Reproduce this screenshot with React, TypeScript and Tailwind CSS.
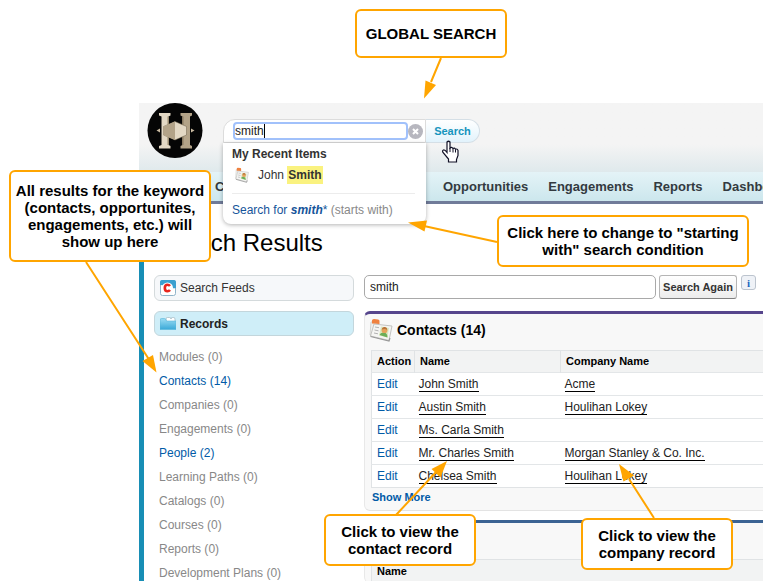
import React from "react";

const modules = [
  { name: "Modules", count: 0 },
  { name: "Contacts", count: 14 },
  { name: "Companies", count: 0 },
  { name: "Engagements", count: 0 },
  { name: "People", count: 2 },
  { name: "Learning Paths", count: 0 },
  { name: "Catalogs", count: 0 },
  { name: "Courses", count: 0 },
  { name: "Reports", count: 0 },
  { name: "Development Plans", count: 0 },
];

const contacts = [
  { name: "John Smith", company: "Acme" },
  { name: "Austin Smith", company: "Houlihan Lokey" },
  { name: "Ms. Carla Smith", company: "" },
  { name: "Mr. Charles Smith", company: "Morgan Stanley & Co. Inc." },
  { name: "Chelsea Smith", company: "Houlihan Lokey" },
];

function Logo() {
  return (
    <svg viewBox="0 0 56 56" className="ml-px size-14 shrink-0" role="img" aria-label="Company logo">
      <circle cx="28" cy="27.500" r="27.500" fill="#050505" />
      <path d="M12 10h11.500v2.500l-2 1V42l2 1v2.500H12V43l2.500-1V13.500l-2.500-1z" fill="#e3d8c4" />
      <path d="M20.500 13.500h1.500V42h-1.500z" fill="#9a8b70" />
      <path d="M33.500 10H45v2.500l-2 1V42l2 1v2.500H33.500V43l2-1V13.500l-2-1z" fill="#b3a388" />
      <path d="M35 13.500h1.500V42H35z" fill="#8a7b62" />
      <path d="M9.500 27.500l3.500-2v4zM47.500 27.500l-3.500-2v4z" fill="#c9baa0" />
      <path d="M28 18.500l11.500 5v8.500L28 37l-11.500-5v-8.500z" fill="#e3d8c4" stroke="#6d604b" strokeWidth="0.500" />
      <path d="M28 18.500V37l-11.500-5v-8.500z" fill="#b3a388" />
    </svg>
  );
}

function ContactIcon({ className }: { className: string }) {
  return (
    <svg viewBox="0 0 24 24" preserveAspectRatio="none" className={className} aria-hidden="true">
      <path d="M2 4l7-1 1 16-9-2z" fill="#f1f1ef" stroke="#c5c5c2" strokeWidth="0.7" />
      <path d="M3 2.500Q3 1 5 1l4 .5q1.500 0 1.500 1.500V6L3 5.500z" fill="#ef813f" />
      <path d="M5 6l18 2-3 14.500L1.500 18z" fill="#f5f5f3" stroke="#b6b6b4" strokeWidth="0.8" />
      <path d="M1.500 18.500l18.500 4.500 1-3" fill="none" stroke="#999" strokeWidth="1.200" />
      <path d="M6 9l4 .7M5.500 12l4 .8M5 15l4 .8" stroke="#aaa" strokeWidth="0.900" />
      <path d="M12 8.500l8 1.500-1.500 9.500-8.500-2z" fill="#dbe8c0" />
      <path d="M10.500 17q1-3 4.500-2.500 3.500.5 3.500 5z" fill="#6cae58" />
      <circle cx="15.500" cy="12.200" r="2.900" fill="#e6a35c" />
      <path d="M12.700 11.500q.5-3 3.200-2.500 2.500.5 2.200 3-1.500-1.500-5.400-.5z" fill="#b9743a" />
    </svg>
  );
}

function FeedIcon() {
  return (
    <svg viewBox="0 0 16 16" className="size-4" aria-hidden="true">
      <rect x="0.500" y="0.500" width="15" height="15" rx="2" fill="#fff" stroke="#8fb3c9" />
      <path d="M0 2q0-2 2-2h12q2 0 2 2v6q-4 1-7-1T0 5z" fill="#3ba0cf" />
      <circle cx="7.500" cy="8" r="5.500" fill="#fff" />
      <path d="M10 6Q9 4.700 7.500 4.700 4.800 4.700 4.800 8T7.500 11.300Q9 11.300 10 10" fill="none" stroke="#e8251d" strokeWidth="2.600" />
    </svg>
  );
}

function FolderIcon() {
  return (
    <svg viewBox="0 0 16 14" className="h-3.5 w-4" aria-hidden="true">
      <defs>
        <linearGradient id="folder" x2="0" y2="1">
          <stop stopColor="#9bdcf3" />
          <stop offset="1" stopColor="#3aa9d8" />
        </linearGradient>
      </defs>
      <path d="M6 2q0-1.500 1.500-1.500h2Q11 .5 11 2q0-1.500 1.500-1.500h1Q15 .5 15 2v3H6z" fill="#fff" stroke="#9fb4bf" strokeWidth="0.700" />
      <path d="M0 3q0-1.500 1.500-1.500h3Q6 1.500 6.500 4H16v8.500H0z" fill="url(#folder)" stroke="#58b5da" strokeWidth="0.600" />
    </svg>
  );
}

function Callout({ className, children }: { className: string; children: React.ReactNode }) {
  return (
    <div
      className={`absolute z-30 flex items-center justify-center rounded-md border-2 border-[#ffa500] bg-white text-center text-[15px] leading-[17px] font-bold text-black ${className}`}
    >
      <p>{children}</p>
    </div>
  );
}

function Arrows() {
  return (
    <svg width="763" height="581" className="pointer-events-none absolute top-0 left-0 z-20" fill="#ffa500" stroke="#ffa500" strokeWidth="2" aria-hidden="true">
      <path d="M441 58L431 82M86 262L150 361M497 307" fill="none" />
      <path d="M424 98.500L425.500 80.500 436 85z" stroke="none" />
      <path d="M156.500 372.500L142.500 361 153 355z" stroke="none" />
      <path d="M497 242L424 226M396 515L437 471M654 518L629 479" fill="none" />
      <path d="M408 222.500L427 220.500 424.500 231.500z" stroke="none" />
      <path d="M447 461L440.500 477.500 431.500 469z" stroke="none" />
      <path d="M619 464L634 475.500 623.500 481.500z" stroke="none" />
    </svg>
  );
}

function Header() {
  return (
    <header>
      <div className="flex h-[69px] items-start bg-linear-to-b from-[#f4f4f4] from-60% to-[#dfe9ec] pl-[7px]">
        <Logo />
        <form className="relative mt-4 ml-5 flex h-6 items-stretch" onSubmit={(e) => e.preventDefault()}>
          <div className="relative flex w-[203px] items-center rounded-tl-xl border border-[#dcdcdc] bg-white pl-[9px]">
            <input
              aria-label="Global search"
              defaultValue="smith"
              className="h-[18px] w-[175px] rounded-sm border-2 border-[#a1c1fb] bg-white text-xs text-[#222] outline-none"
            />
            <span className="absolute top-1 left-10 h-3.5 w-px bg-black" />
            <button type="button" aria-label="Clear search">
              <svg viewBox="0 0 15 15" className="size-[15px]" aria-hidden="true">
                <circle cx="7.500" cy="7.500" r="7.500" fill="#b7b7bf" />
                <path d="M5 5l5 5M10 5l-5 5" stroke="#fff" strokeWidth="2" />
              </svg>
            </button>
          </div>
          <button className="w-[54px] rounded-r-full border border-l-0 border-[#d5dfe6] bg-linear-to-b from-white to-[#e2f3fc] text-[11px] font-bold text-[#1694bd]">
            Search
          </button>
          <svg viewBox="0 0 18 23" className="absolute top-[21px] left-[218px] z-20 h-[23px] w-[18px]" aria-hidden="true">
            <path d="M6 2q1.500-1.500 3 0v6q1.500-1.500 3 .5 1.500-1 2.500.7 2-.7 2.500 1.300v5l-1.500 4v2.500H7.500V19L2 12.500q-1-2 .5-2.500 1.500-.3 3.500 2.500z" fill="#fff" stroke="#111126" strokeWidth="1.200" />
            <path d="M9 8v4M12 8.500v4M14.500 9.500v3" stroke="#111126" />
          </svg>
          <div className="absolute top-6 left-0 z-10 w-[203px] rounded-b-lg bg-white px-[9px] pb-1.5 text-xs text-[#333] shadow-[0_1px_4px_rgba(0,0,0,0.3)]">
            <h2 className="pt-[3px] leading-4 font-bold">My Recent Items</h2>
            <a href="#john" className="mt-[3px] flex h-5 items-center">
              <ContactIcon className="ml-[3px] h-4 w-3.5" />
              <span className="ml-[9px]">
                John <mark className="bg-[#faf27f] px-px py-0.5 font-bold text-[#333]">Smith</mark>
              </span>
            </a>
            <div className="mt-2 mr-0.5 border-t border-[#ececec] pt-2 leading-4 whitespace-nowrap">
              <a href="#starts" className="text-[#15549a]">
                Search for <em className="font-bold">smith</em>*
              </a>{" "}
              <span className="text-[#888]">(starts with)</span>
            </div>
          </div>
        </form>
      </div>
      <nav className="flex h-8 items-center gap-5 overflow-hidden border-b-3 border-[#707b99] bg-linear-to-b from-[#e4f3f7] to-[#cce7ed] pl-[76px] text-[13px] font-bold whitespace-nowrap text-[#333a40]">
        <a href="#contacts" className="w-52 shrink-0">Contacts</a>
        <a href="#opportunities">Opportunities</a>
        <a href="#engagements">Engagements</a>
        <a href="#reports">Reports</a>
        <a href="#dashboards">Dashboards</a>
      </nav>
    </header>
  );
}

const th = "text-left text-[11px] font-bold text-black pl-[5px]";

function Sidebar() {
  return (
    <aside className="w-[200px] shrink-0 text-xs">
      <a href="#feeds" className="flex h-[26px] items-center gap-1 rounded-md border border-[#d4dadc] bg-[#f6f8fa] pl-[5px] text-[#333]">
        <FeedIcon />
        Search Feeds
      </a>
      <a href="#records" className="mt-2.5 flex h-[25px] items-center gap-1 rounded-md border border-[#c3d6dc] bg-[#cfeef8] pl-[5px] font-bold text-[#222]">
        <FolderIcon />
        Records
      </a>
      <ul className="mt-[9px] pl-[5px] leading-6">
        {modules.map((m) => (
          <li key={m.name}>
            <a href="#module" className={m.count > 0 ? "text-[#015ba7]" : "text-[#888]"}>
              {m.name} ({m.count})
            </a>
          </li>
        ))}
      </ul>
    </aside>
  );
}

function Results() {
  return (
    <div className="min-w-0 flex-1">
      <form className="flex items-start" onSubmit={(e) => e.preventDefault()}>
        <input aria-label="Search term" defaultValue="smith" className="h-6 w-[292px] rounded-[5px] border border-[#a9a9a9] bg-white px-[5px] text-xs text-[#222]" />
        <button className="ml-[3px] h-6 w-[78px] rounded-[3px] border border-[#b5b5b5] border-b-[#7f7f7f] bg-linear-to-b from-white to-[#ececec] text-[11px] font-bold whitespace-nowrap text-[#333]">
          Search Again
        </button>
        <button type="button" aria-label="Information" className="ml-1 size-[15px] rounded-[3px] border border-[#bcc4ce] bg-[#eff2f7] font-['Liberation_Serif',serif] text-[11px] leading-3 font-bold text-[#1c66c0]">
          i
        </button>
      </form>
      <section className="mt-3 rounded-l-md border-t-3 border-b border-l border-t-[#56458c] border-b-[#e3e3e3] border-l-[#e8e8e8] bg-[#f8f8f8] pl-1.5">
        <div className="flex h-9 items-center gap-1 pb-1">
          <ContactIcon className="-ml-0.5 size-6" />
          <h2 className="text-sm font-bold text-black">Contacts (14)</h2>
        </div>
        <table className="w-full table-fixed border-collapse border border-r-0 border-[#e0e3e5] bg-white text-xs">
          <thead>
            <tr className="h-[22px] bg-[#f2f3f3]">
              <th className={`w-[43px] border-r border-[#e0e3e5] ${th}`}>Action</th>
              <th className={`w-[146px] border-r border-[#e0e3e5] ${th}`}>Name</th>
              <th className={th}>Company Name</th>
            </tr>
          </thead>
          <tbody>
            {contacts.map((c) => (
              <tr key={c.name} className="h-[23px] border-t border-[#e3e6e8]">
                <td className="pl-[5px]">
                  <a href="#edit" className="text-[#015ba7]">Edit</a>
                </td>
                <td className="pl-1">
                  <a href="#contact" className="border-b border-black leading-3 text-[#222]">{c.name}</a>
                </td>
                <td className="pl-1">
                  {c.company && <a href="#company" className="border-b border-black leading-3 text-[#222]">{c.company}</a>}
                </td>
              </tr>
            ))}
          </tbody>
        </table>
        <a href="#more" className="block h-[22px] pt-px pl-px text-[11px] leading-4 font-bold text-[#015ba7]">Show More</a>
      </section>
      <section className="mt-[9px] rounded-l-md border-t-3 border-l border-t-[#3b6393] border-l-[#e8e8e8] bg-[#f8f8f8] pt-9 pl-1.5">
        <table className="w-full border-collapse border border-r-0 border-[#e0e3e5]">
          <thead>
            <tr className="h-[23px] bg-[#f2f3f3]">
              <th className={th}>Name</th>
            </tr>
          </thead>
        </table>
      </section>
    </div>
  );
}

export default function App() {
  return (
    <div className="relative h-screen overflow-hidden bg-white pt-[103px] pl-[139px] font-['Liberation_Sans',Arial,sans-serif]">
      <Header />
      <main className="border-l-5 border-[#188eb5] pl-2.5">
        <h1 className="pt-[22px] pl-1.5 text-2xl leading-[34px] text-black">Search Results</h1>
        <div className="mt-[15px] flex gap-2.5">
          <Sidebar />
          <Results />
        </div>
      </main>
      <Arrows />
      <Callout className="top-[9px] left-[355px] h-[49px] w-[152px]">GLOBAL SEARCH</Callout>
      <Callout className="top-[170px] left-[9px] h-[92px] w-[202px]">
        All results for the keyword<br />(contacts, opportunites,<br />engagements, etc.) will<br />show up here
      </Callout>
      <Callout className="top-[215px] left-[497px] h-[52px] w-[252px]">
        Click here to change to "starting<br />with" search condition
      </Callout>
      <Callout className="top-[514px] left-[324px] h-[52px] w-[152px]">
        Click to view the<br />contact record
      </Callout>
      <Callout className="top-[518px] left-[581px] h-[52px] w-[152px]">
        Click to view the<br />company record
      </Callout>
    </div>
  );
}
